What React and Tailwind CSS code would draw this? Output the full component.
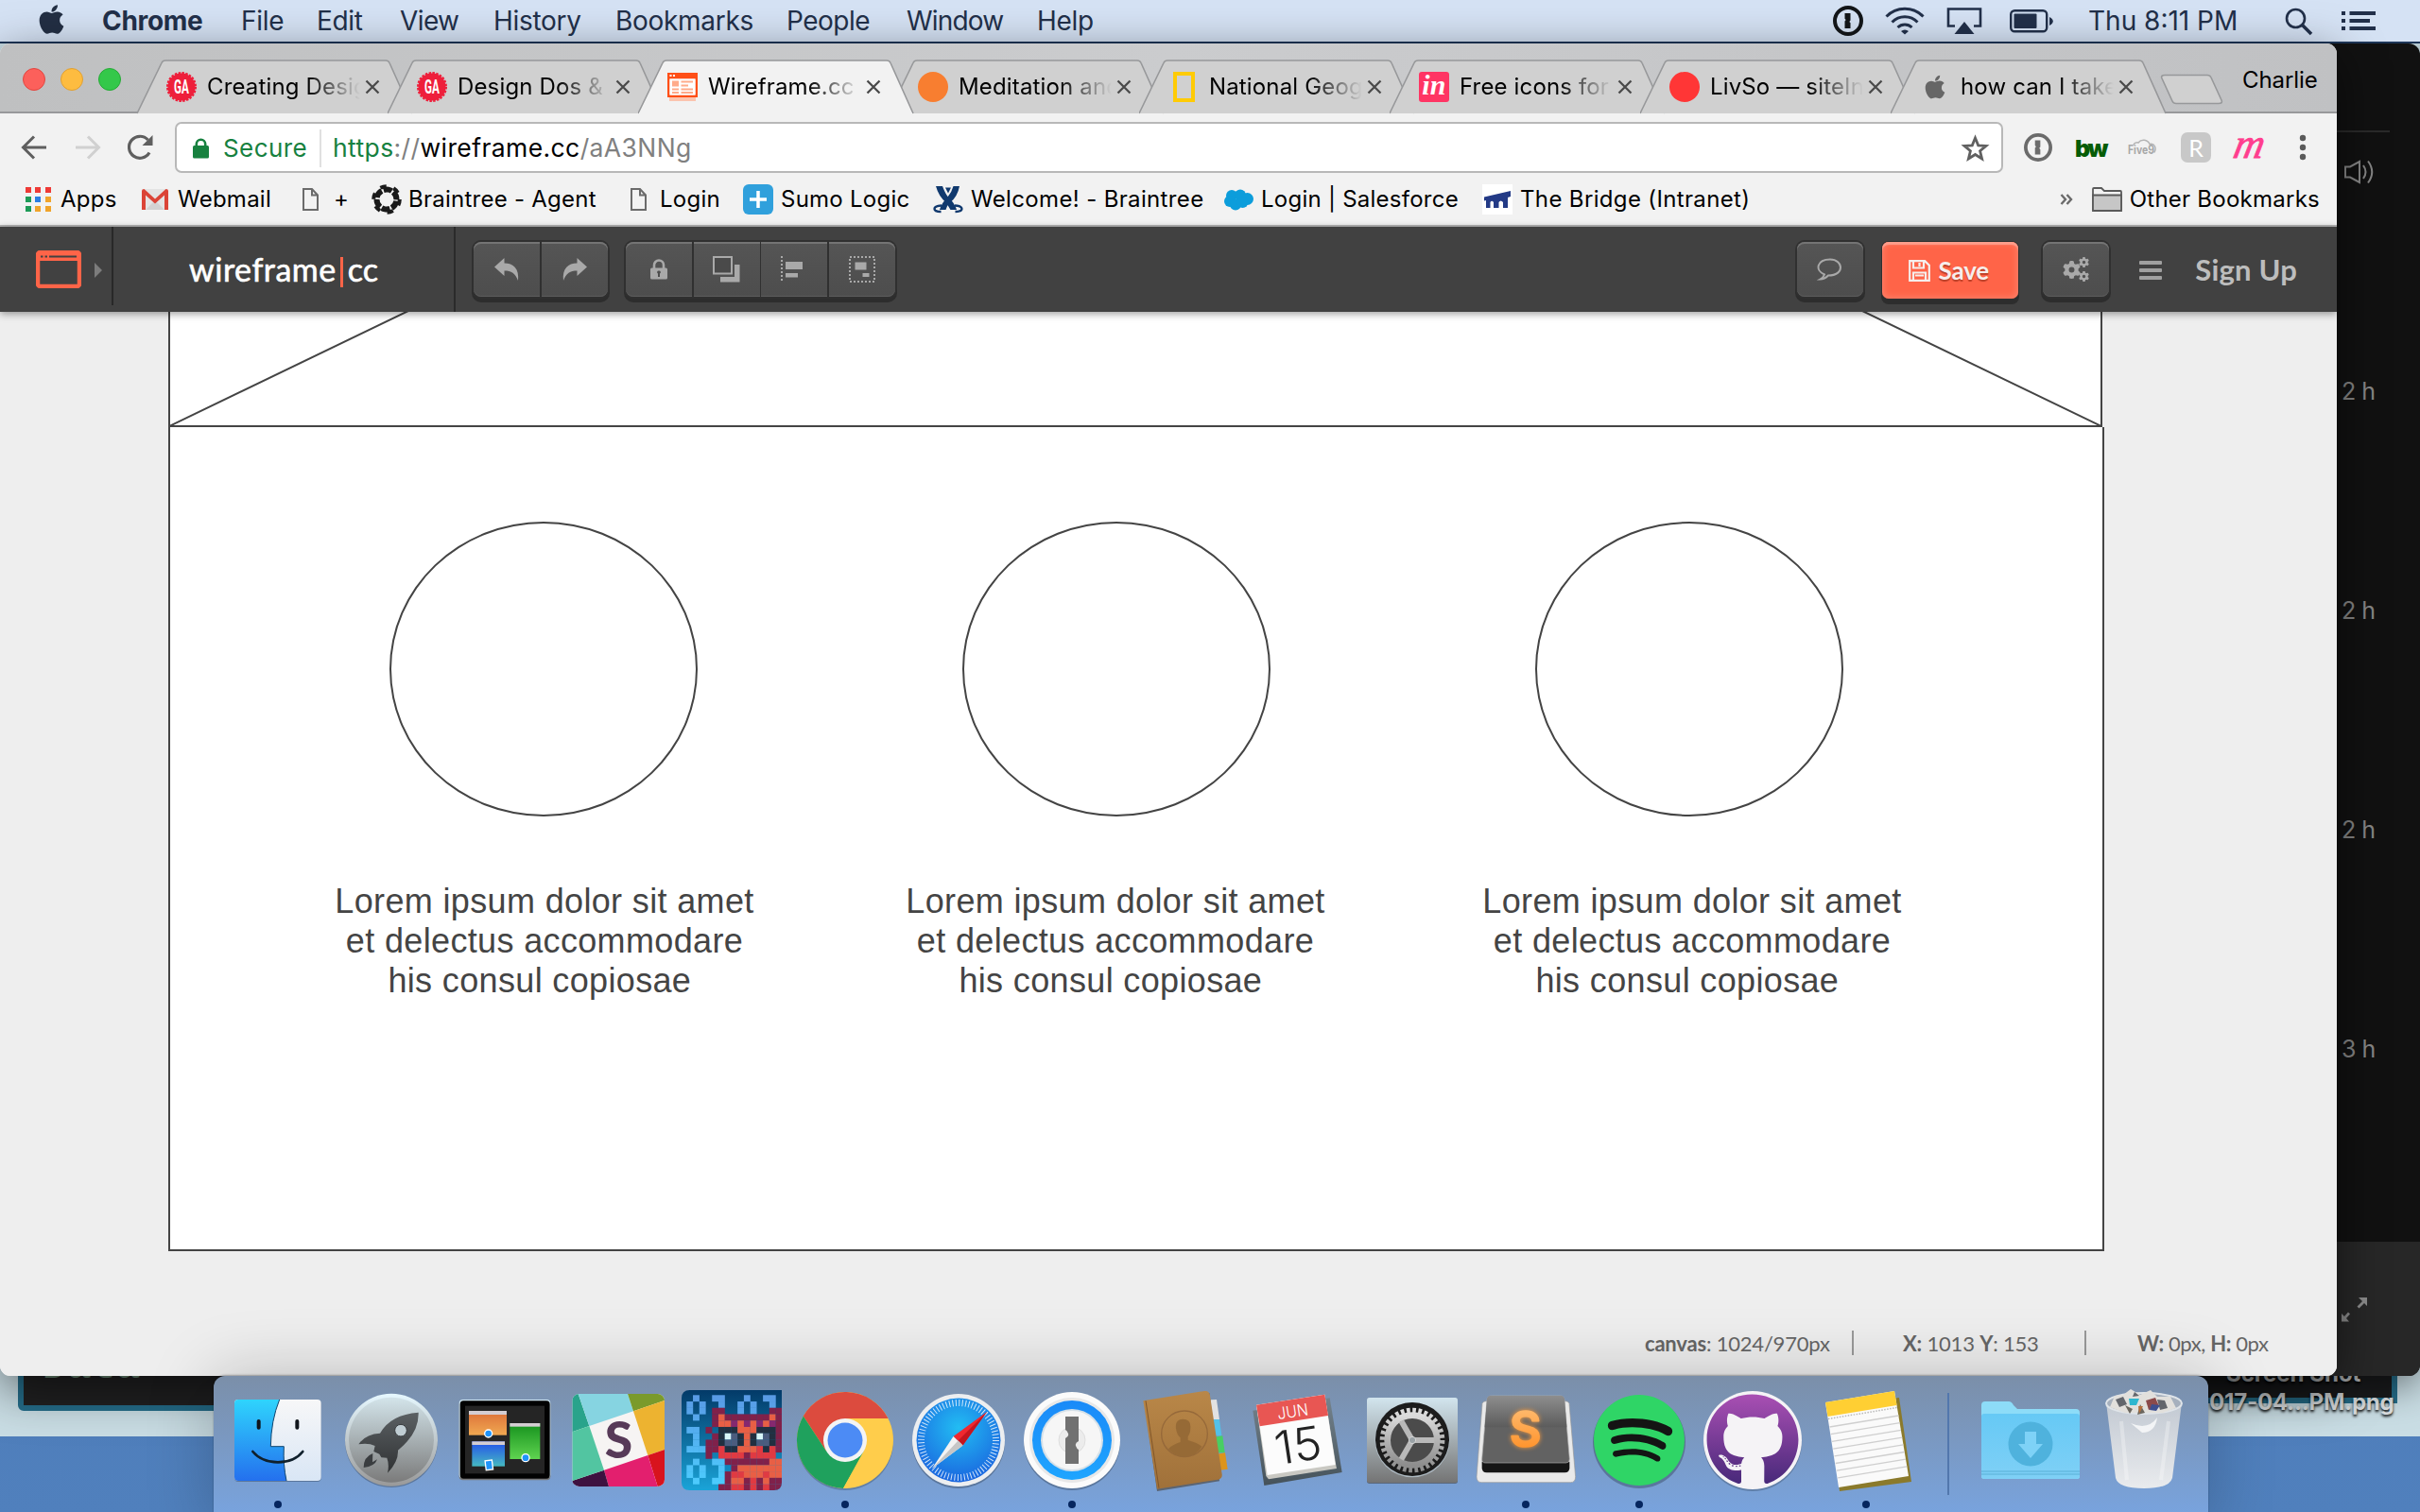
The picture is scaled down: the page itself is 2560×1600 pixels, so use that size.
import { FaApple, FaGithub, FaSpotify } from "react-icons/fa";
import { FaGear } from "react-icons/fa6";

/* ---------- shared little drawings ---------- */

function OnePasswordGlyph({ size, className }) {
  return (
    <svg width={size} height={size} viewBox="0 0 32 32" className={className}>
      <circle cx="16" cy="16" r="14" fill="none" stroke="currentColor" strokeWidth="4" />
      <path d="M12.5 8h6v7.5l-1.2 1.4 1.2 1.4V24h-6v-7.5l1.2-1.4-1.2-1.4z" fill="currentColor" />
    </svg>
  );
}

/* ---------- macOS menu bar ---------- */

function MenuBar() {
  return (
    <div className="absolute inset-x-0 top-0 flex h-[46px] border-b-2 border-[#1d3557] bg-[#d5e2f4] text-[28px] leading-[44px] tracking-[-0.3px] text-[#22304a]">
      <div className="w-[108px] pl-[40px] pt-[3px]">
        <FaApple className="h-[35px] w-[29px] text-[#232f44]" />
      </div>
      <div className="w-[147px] font-bold">Chrome</div>
      <div className="w-[80px]">File</div>
      <div className="w-[88px]">Edit</div>
      <div className="w-[99px] tracking-[-0.6px]">View</div>
      <div className="w-[129px]">History</div>
      <div className="w-[181px]">Bookmarks</div>
      <div className="w-[127px] tracking-[-0.5px]">People</div>
      <div className="w-[138px] tracking-[-0.8px]">Window</div>
      <div>Help</div>
      <div className="ml-auto flex w-[621px] items-start">
        <OnePasswordGlyph size={32} className="mt-[6px] text-[#131619]" />
        <svg className="ml-[22px] mt-[6px]" width="44" height="32" viewBox="0 0 44 32" fill="none" stroke="#22304a" strokeWidth="3">
          <path d="M2.500 11.500a27 27 0 0 1 39 0" />
          <path d="M8.500 17.500a19 19 0 0 1 27 0" />
          <path d="M14.500 23a11 11 0 0 1 15 0" />
          <path d="M18 27a6 6 0 0 1 8 0l-4 3.500z" fill="#22304a" stroke="none" />
        </svg>
        <svg className="ml-[22px] mt-[7px]" width="38" height="30" viewBox="0 0 38 30">
          <path d="M9 20.500H2V2.500h34v18h-7" fill="none" stroke="#22304a" strokeWidth="2.600" />
          <path d="M19 16l10.500 13h-21z" fill="#22304a" />
        </svg>
        <svg className="ml-[29px] mt-[10px]" width="46" height="25" viewBox="0 0 46 25">
          <rect x="1.200" y="1.200" width="38" height="22" rx="4" fill="none" stroke="#22304a" strokeWidth="2.400" />
          <rect x="4.500" y="4.500" width="24" height="15.500" rx="1" fill="#22304a" />
          <path d="M42 8c5 2 5 7 0 9z" fill="#22304a" />
        </svg>
        <div className="ml-[37px] w-[208px] tracking-[0px]">Thu 8:11 PM</div>
        <svg className="mt-[8px]" width="31" height="30" viewBox="0 0 31 30" fill="none" stroke="#22304a">
          <circle cx="11.500" cy="11.500" r="9.500" strokeWidth="2.600" />
          <path d="M18.500 18.500l9.500 9.500" strokeWidth="3.600" />
        </svg>
        <svg className="ml-[29px] mt-[11px]" width="37" height="22" viewBox="0 0 37 22" fill="#22304a">
          <path d="M0 1h4v4H0zM8.500 1H36v4H8.500zM0 9h4v4H0zM8.500 9H30v4H8.500zM0 17h4v4H0zM8.500 17H36v4H8.500z" />
        </svg>
      </div>
    </div>
  );
}

/* ---------- Chrome tabs ---------- */

function GeneralAssembly() {
  return (
    <svg width="32" height="32" viewBox="0 0 32 32">
      <circle cx="16" cy="16" r="14.500" fill="#ee1f3b" />
      <circle cx="16" cy="16" r="14.800" fill="none" stroke="#ee1f3b" strokeWidth="2.400" strokeDasharray="2.500 1.375" />
      <text x="16" y="23" textAnchor="middle" textLength="16" lengthAdjust="spacingAndGlyphs" fontSize="20" fontWeight="700" fill="#fff" fontFamily="Roboto, sans-serif">GA</text>
    </svg>
  );
}

function WireframeFavicon() {
  return (
    <svg width="32" height="30" viewBox="0 0 32 30">
      <path d="M2 26h28v4H2z" fill="#fbc4ae" />
      <path d="M0 0h32v26H0zM2.500 6.500v17h27v-17z" fill="#ff4f17" fillRule="evenodd" />
      <path d="M2.500 2h2v2h-2zM6 2h2v2H6z" fill="#fff" />
      <path d="M2.500 6.500h27v17h-27z" fill="#fff" />
      <path d="M5 8.500h7v6H5zM14.500 8.500H27v2H14.500zM14.500 12.500H22v2h-7.500zM5 16.500h7v2H5zM14.500 16.500H27v2H14.500zM5 20h7v2H5zM14.500 20H27v2H14.500z" fill="#ffab8a" />
    </svg>
  );
}

const tabs = [
  { label: "Creating Desig", icon: <GeneralAssembly /> },
  { label: "Design Dos &", icon: <GeneralAssembly /> },
  { label: "Wireframe.cc", icon: <WireframeFavicon />, active: true },
  { label: "Meditation and", icon: <div className="size-8 rounded-full bg-[#f87e30]" /> },
  {
    label: "National Geog",
    icon: (
      <div className="flex w-8 justify-center">
        <div className="h-8 w-[23px] border-[4px] border-[#ffcb05]" />
      </div>
    ),
  },
  {
    label: "Free icons for",
    icon: (
      <div className="flex size-8 items-center justify-center rounded-[3px] bg-[#ff3564] pb-1 font-['Liberation_Serif',serif] text-[30px] font-bold italic leading-none text-white">
        in
      </div>
    ),
  },
  { label: "LivSo — siteIn", icon: <div className="size-8 rounded-full bg-[#ff3636]" /> },
  { label: "how can I take", icon: <FaApple className="mx-[4px] h-[28px] w-[24px] text-[#666]" /> },
];

function Tab({ tab }) {
  return (
    <div className={tab.active ? "relative z-10 h-[57px] w-[265px] shrink-0" : "relative h-[57px] w-[265px] shrink-0"}>
      <svg className="absolute left-0 top-0" width="292" height="58" viewBox="0 0 292 58">
        <path
          d="M0 57L26 3.500Q27 1 30 1H263Q266 1 267 3.500L291 57"
          fill={tab.active ? "#f2f2f2" : "#d0d0d0"}
          stroke="#97989a"
          strokeWidth="1.600"
        />
        {tab.active && <path d="M1 57.500H290" stroke="#f2f2f2" strokeWidth="3" />}
      </svg>
      <div className="relative flex h-[57px] items-center pl-[31px] text-[24px] tracking-[0.150px] text-black">
        <div className="flex w-8 shrink-0 justify-center">{tab.icon}</div>
        <div className="-mr-[20px] ml-[11px] w-[178px] shrink-0 whitespace-nowrap leading-[56px] [mask-image:linear-gradient(to_right,black_105px,transparent_162px)]">
          {tab.label}
        </div>
        <svg className="ml-[9px] shrink-0" width="16" height="16" viewBox="0 0 16 16" stroke="#4a4a4a" strokeWidth="2.300">
          <path d="M1.500 1.500l13 13M14.500 1.500l-13 13" />
        </svg>
      </div>
    </div>
  );
}

function TabStrip() {
  return (
    <div className="flex h-[74px] border-b-2 border-[#98999b] bg-gradient-to-r from-[#bfc0c1] via-[#cbccce] to-[#c0c1c3]">
      <div className="flex w-[145px] shrink-0 gap-4 pl-6 pt-[26px]">
        <div className="size-6 rounded-full border border-[#e2453f] bg-[#fc605b]" />
        <div className="size-6 rounded-full border border-[#e0a032] bg-[#fdbc40]" />
        <div className="size-6 rounded-full border border-[#25ab35] bg-[#34c84a]" />
      </div>
      <div className="flex pt-[17px]">
        {tabs.map((t) => (
          <Tab key={t.label} tab={t} />
        ))}
      </div>
      <svg className="ml-[20px] mt-[32px] shrink-0" width="68" height="34" viewBox="0 0 68 34">
        <path d="M5 1.500H50Q53 1.500 54 4L65 28Q66.500 31.500 62 31.500H17Q14 31.500 13 29L2 5Q0.500 1.500 5 1.500z" fill="#d0d0d0" stroke="#97989a" strokeWidth="1.600" />
      </svg>
      <div className="ml-[19px] text-[24px] leading-[77px] tracking-[-0.1px] text-black">Charlie</div>
    </div>
  );
}

/* ---------- Chrome toolbar ---------- */

function AddressBar() {
  return (
    <div className="flex h-[64px] items-start pt-[9px]">
      <svg className="ml-[22px] mt-[14px]" width="28" height="26" viewBox="0 0 28 26" fill="none" stroke="#5f5f5f" strokeWidth="3">
        <path d="M27 13H3M14 1.500L2.500 13 14 24.500" />
      </svg>
      <svg className="ml-[29px] mt-[14px]" width="28" height="26" viewBox="0 0 28 26" fill="none" stroke="#d0d0d0" strokeWidth="3">
        <path d="M1 13h24M14 1.500L25.500 13 14 24.500" />
      </svg>
      <svg className="ml-[27px] mt-[13px]" width="29" height="28" viewBox="0 0 29 28">
        <path d="M24 19.500A11.500 11.500 0 1 1 22.500 6" fill="none" stroke="#5f5f5f" strokeWidth="3.200" />
        <path d="M27.500 1v11h-11z" fill="#5f5f5f" />
      </svg>
      <div className="ml-[22px] flex h-[54px] w-[1934px] items-center rounded-[7px] border-2 border-[#b8b8b8] bg-white pt-[1px] text-[26.500px] tracking-[0.400px]">
        <svg className="ml-[17px]" width="17" height="22" viewBox="0 0 17 22">
          <path d="M3.800 9V6.500a4.700 4.700 0 0 1 9.400 0V9" fill="none" stroke="#17813f" strokeWidth="2.600" />
          <rect y="8" width="17" height="13.500" rx="1.500" fill="#17813f" />
        </svg>
        <div className="ml-[15px] text-[26px] text-[#17813f]">Secure</div>
        <div className="ml-[13px] h-10 w-[2px] bg-[#e0e0e0]" />
        <div className="ml-[12px] text-[#808080]">
          <span className="text-[#17813f]">https</span>://<span className="text-black">wireframe.cc</span>/aA3NNg
        </div>
        <svg className="ml-auto mr-[12px]" width="31" height="30" viewBox="0 0 31 30">
          <path d="M15.500 4l3.200 7.800 8.300.6-6.400 5.400 2 8.200-7.100-4.500-7.100 4.500 2-8.200L4 12.400l8.300-.6z" fill="none" stroke="#606060" strokeWidth="2.800" />
        </svg>
      </div>
      <OnePasswordGlyph size={30} className="ml-[22px] mt-[12px] text-[#6b6b6b]" />
      <div className="ml-[24px] mt-[10px] w-[32px] font-['Inter',sans-serif] text-[25px] font-black leading-[36px] tracking-[-2.500px] text-[#065c06]">bw</div>
      <svg className="ml-[24px] mt-[17px]" width="32" height="20" viewBox="0 0 32 20">
        <path d="M6 7.500a4 4 0 0 1 5-2.500 7 7 0 0 1 12 1.500c5-1.500 8 4.500 4.500 9" fill="none" stroke="#b4b4b4" strokeWidth="1.500" />
        <text x="0" y="16.500" textLength="28" lengthAdjust="spacingAndGlyphs" fontSize="12.500" fontWeight="700" fill="#a8a8a8" fontFamily="Inter, sans-serif">Five9</text>
      </svg>
      <div className="ml-[24px] mt-[11px] flex size-8 items-center justify-center rounded-[7px] bg-[#c8c8c8] font-['Lato',sans-serif] text-[25px] leading-none text-white">R</div>
      <div className="ml-[25px] mt-[2px] w-[34px] -skew-x-12 font-['Liberation_Serif',serif] text-[44px] italic leading-[44px] text-[#ff3e8e] [-webkit-text-stroke:0.8px_#ff3e8e]">m</div>
      <svg className="ml-[34px] mt-[13px]" width="8" height="28" viewBox="0 0 8 28" fill="#5a5a5a">
        <circle cx="4" cy="4" r="3.200" />
        <circle cx="4" cy="14" r="3.200" />
        <circle cx="4" cy="24" r="3.200" />
      </svg>
    </div>
  );
}

function PageIcon() {
  return (
    <svg width="17" height="24" viewBox="0 0 17 24" fill="none" stroke="#6b6b6b" strokeWidth="2">
      <path d="M1 1h9l6 6.500V23H1zM10 1v6.500h6" />
    </svg>
  );
}

function Bookmarks() {
  const dots = ["#ee3a36", "#ee3a36", "#ee3a36", "#1e9b57", "#2a7de1", "#f0a42a", "#1e9b57", "#f0a42a", "#f0a42a"];
  return (
    <div className="flex h-[56px] items-center border-b-2 border-[#b4b4b4] text-[24px] leading-[54px] tracking-[0.250px] text-black">
      <div className="ml-[27px] grid w-[27px] grid-cols-3 gap-[4px]">
        {dots.map((c, i) => (
          <div key={i} className="h-[6px] w-[6px]" style={{ backgroundColor: c }} />
        ))}
      </div>
      <div className="ml-[10px] w-[86px]">Apps</div>
      <svg width="28" height="22" viewBox="0 0 28 22">
        <rect width="28" height="22" rx="2" fill="#e4e4e4" />
        <path d="M4 22L14 12l10 10z" fill="#d3d3d3" />
        <path d="M0 22V2Q0 0 2.500 0L14 10.500 25.500 0Q28 0 28 2V22H24V6.500L14 15.500 4 6.500V22z" fill="#db4437" />
      </svg>
      <div className="ml-[10px] w-[132px]">Webmail</div>
      <PageIcon />
      <div className="ml-[16px] w-[40px]">+</div>
      <svg width="32" height="32" viewBox="-16 -16 32 32">
        <circle r="10.500" fill="none" stroke="#1a1a1a" strokeWidth="6" strokeDasharray="9 2" transform="rotate(10)" />
        <circle r="13.800" fill="none" stroke="#1a1a1a" strokeWidth="4" strokeDasharray="6.500 7.950" />
      </svg>
      <div className="ml-[7px] w-[235px]">Braintree - Agent</div>
      <PageIcon />
      <div className="ml-[14px] w-[88px]">Login</div>
      <div className="flex size-8 items-center justify-center rounded-[6px] bg-[#30a0dc]">
        <svg width="20" height="20" viewBox="0 0 20 20" stroke="#fff" strokeWidth="3.500">
          <path d="M10 1v18M1 10h18" />
        </svg>
      </div>
      <div className="ml-[8px] w-[161px]">Sumo Logic</div>
      <svg width="32" height="30" viewBox="0 0 32 30" fill="#10396e">
        <path d="M3 1h7q3 8 6 11.500Q23 19 25 26h-6.500Q16 22 14 18.500 6 12 3 1z" />
        <path d="M28 1h-6.500q-2 7-6 11.500Q9 19 7 26h6.500Q15 21 18 18.500 26 12 28 1z" />
        <path d="M13 2.500h6l-3 6z" />
        <path d="M9 21.500Q1.500 22 1.500 25t7 3M23 21.500q7.500.5 7.500 3.500t-7 3" fill="none" stroke="#10396e" strokeWidth="2.400" />
      </svg>
      <div className="ml-[8px] w-[268px] tracking-[0.350px]">Welcome! - Braintree</div>
      <svg width="31" height="23" viewBox="0 0 31 23" fill="#0c9ddb">
        <circle cx="8" cy="7" r="6" />
        <circle cx="17" cy="6.500" r="6" />
        <circle cx="24.500" cy="10.500" r="6.500" />
        <circle cx="6" cy="13" r="6" />
        <circle cx="12" cy="16.500" r="6" />
        <circle cx="19.500" cy="14" r="6" />
      </svg>
      <div className="ml-[8px] w-[234px]">Login | Salesforce</div>
      <div className="flex size-8 items-center bg-white">
        <svg width="32" height="22" viewBox="0 0 32 22" fill="#233a86">
          <path d="M2 8.500L30 2v6l-3 1V20h-5v-6q-2.500-3-4.500 0v6H12v-6q-2-2.500-3.500 0v6H4v-8l-2 .5z" />
        </svg>
      </div>
      <div className="ml-[8px] tracking-[0.350px]">The Bridge (Intranet)</div>
      <svg className="ml-auto" width="14" height="12" viewBox="0 0 14 12" fill="none" stroke="#6b6b6b" strokeWidth="2.400">
        <path d="M1.500 1L6 6l-4.500 5M7.500 1L12 6l-4.500 5" />
      </svg>
      <svg className="ml-[20px]" width="32" height="26" viewBox="0 0 32 26">
        <path d="M1 24V2Q1 1 2 1H10L13 4H30Q31 4 31 5V24Q31 25 30 25H2Q1 25 1 24z" fill="#f2f2f2" stroke="#5a5a5a" strokeWidth="1.800" />
        <path d="M1 8.500H31V25H1z" fill="#c6c6c6" stroke="#5a5a5a" strokeWidth="1.800" />
      </svg>
      <div className="ml-[8px] mr-[18px]">Other Bookmarks</div>
    </div>
  );
}

/* ---------- wireframe.cc app ---------- */

function BarButton({ first, last, children }) {
  const base =
    "flex h-[58px] w-[70px] items-center justify-center bg-gradient-to-b from-[#555] to-[#4d4d4d] text-[#a9a9a9] shadow-[inset_0_2px_0_#747474,inset_0_-1px_0_#5c5c5c]";
  const round = first && last ? " rounded-[8px]" : first ? " rounded-l-[8px]" : last ? " rounded-r-[8px]" : "";
  return <div className={base + round}>{children}</div>;
}

function ButtonGroup({ children }) {
  return (
    <div className="flex h-[58px] gap-[1.500px] rounded-[8px] bg-[#303030] shadow-[0_0_0_2px_#303030,0_4px_0_2px_#2d2d2d]">{children}</div>
  );
}

function AppHeader() {
  return (
    <div className="relative z-10 flex h-[90px] items-start bg-[#414141] font-['Lato',sans-serif] shadow-[0_2px_8px_rgba(0,0,0,0.4)]">
      <div className="flex h-[83px] w-[120px] border-r-2 border-[#282828]">
        <svg className="ml-[38px] mt-[25px]" width="48" height="40" viewBox="0 0 48 40">
          <rect x="2" y="2" width="44" height="36" rx="2.500" fill="#414141" stroke="#ff6448" strokeWidth="4.500" />
          <path d="M2 2h44v9H2z" fill="#ff6448" />
          <path d="M5 5.500h2.500v2H5zM9.500 5.500H12v2H9.500zM14 5.500h29v2H14z" fill="#414141" />
        </svg>
        <svg className="ml-[14px] mt-[38px]" width="8" height="16" viewBox="0 0 8 16">
          <path d="M0 0l8 8-8 8z" fill="#7c7c7c" />
        </svg>
      </div>
      <div className="flex h-[90px] w-[362px] items-center justify-center border-r-2 border-[#2a2a2a] text-[34px] leading-[90px] text-white [-webkit-text-stroke:0.6px_white]">
        <span className="tracking-[0.500px]">wireframe</span>
        <span className="ml-[4px] mr-[5px] mt-[5px] h-[32px] w-[3px] bg-[#ff6448]" />
        <span>cc</span>
      </div>
      <div className="ml-[19px] mt-4">
        <ButtonGroup>
          <BarButton first>
            <svg width="27" height="25" viewBox="0 0 27 25" fill="currentColor">
              <path d="M10.500 0v5.500C20 5.500 26.500 11 25 24 22 16 18 13.500 10.500 13.500V19L0 9.500z" />
            </svg>
          </BarButton>
          <BarButton last>
            <svg width="27" height="25" viewBox="0 0 27 25" fill="currentColor">
              <path d="M16.500 0v5.500C7 5.500.5 11 2 24 5 16 9 13.500 16.500 13.500V19L27 9.500z" />
            </svg>
          </BarButton>
        </ButtonGroup>
      </div>
      <div className="ml-[19.500px] mt-4">
        <ButtonGroup>
          <BarButton first>
            <svg width="18" height="22" viewBox="0 0 18 22">
              <path d="M4 10V6.500a5 5 0 0 1 10 0V10" fill="none" stroke="currentColor" strokeWidth="2.600" />
              <rect y="9.500" width="18" height="12" rx="1.500" fill="currentColor" />
              <path d="M9 12.500a1.600 1.600 0 0 1 1 3v3.500H8v-3.500a1.600 1.600 0 0 1 1-3z" fill="#4d4d4d" />
            </svg>
          </BarButton>
          <BarButton>
            <svg width="29" height="28" viewBox="0 0 29 28">
              <path d="M23 9h5.500v18.500H8V22h15z" fill="currentColor" />
              <rect x="1" y="1" width="19" height="17.500" fill="#4a4a4a" stroke="currentColor" strokeWidth="2" />
            </svg>
          </BarButton>
          <BarButton>
            <svg className="mr-[4px]" width="24" height="28" viewBox="0 0 24 28">
              <path d="M1 0v28" stroke="currentColor" strokeWidth="2" strokeDasharray="2 2" />
              <path d="M5 6h18v8H5zM5 18h13v4.500H5z" fill="currentColor" />
            </svg>
          </BarButton>
          <BarButton last>
            <svg width="28" height="28" viewBox="0 0 28 28">
              <rect x="1" y="1" width="26" height="26" fill="none" stroke="currentColor" strokeWidth="2" strokeDasharray="2 2" />
              <path d="M6.500 6.500h12v8h-12zM14.500 18h7v4h-7z" fill="currentColor" />
            </svg>
          </BarButton>
        </ButtonGroup>
      </div>
      <div className="ml-auto mt-4">
        <ButtonGroup>
          <BarButton first last>
            <svg width="28" height="24" viewBox="0 0 28 24" fill="none" stroke="currentColor" strokeWidth="2">
              <path d="M8 17.500C-2.500 13 0 1.500 14 1.500S30 18.500 12 18.500Q8 22.500 3.500 22.500 7 20.500 8 17.500z" />
            </svg>
          </BarButton>
        </ButtonGroup>
      </div>
      <div className="ml-[20px] mt-4 flex h-[60px] w-[144px] items-center justify-center gap-[9px] rounded-[7px] bg-[#ff6448] pr-[4px] text-[26px] font-bold text-[#f6eeec] shadow-[0_0_0_1px_#303030,0_5px_0_1px_#2d2d2d,inset_0_3px_1px_#ff9d8b,inset_0_0_8px_#ff8a74] [text-shadow:0_2px_1px_rgba(120,30,10,0.5)]">
        <svg width="23" height="23" viewBox="0 0 23 23" fill="none" stroke="#f6eeec" strokeWidth="2.200">
          <path d="M1.200 1.200h16l4.600 4.600v16H1.200zM5 1.500v7h11v-7M5 21.500v-8h13v8M7 16.500h9" />
          <path d="M11.500 3v4" />
        </svg>
        <span className="tracking-[-0.200px]">Save</span>
      </div>
      <div className="ml-[26px] mt-4">
        <ButtonGroup>
          <BarButton first last>
            <span className="relative flex h-[26px] w-[28px] items-center">
              <FaGear className="size-[19px]" />
              <FaGear className="absolute right-0 top-0 size-[11px]" />
              <FaGear className="absolute bottom-0 right-0 size-[11px]" />
            </span>
          </BarButton>
        </ButtonGroup>
      </div>
      <div className="ml-[32px] mt-[36px] flex w-[24px] flex-col gap-[4px]">
        <div className="h-[4px] rounded-[1px] bg-[#a0a0a0]" />
        <div className="h-[4px] rounded-[1px] bg-[#a0a0a0]" />
        <div className="h-[4px] rounded-[1px] bg-[#a0a0a0]" />
      </div>
      <div className="ml-[35px] mr-[42px] text-[31px] font-bold leading-[90px] tracking-[0.200px] text-[#bdbdbd]">Sign Up</div>
    </div>
  );
}

function Feature({ textClass }) {
  return (
    <div className="flex w-[606px] flex-col items-center">
      <div className="h-[312px] w-[326px] rounded-[50%] border-2 border-[#444]" />
      <div className={textClass}>
        Lorem ipsum dolor sit amet
        <br />
        et delectus accommodare
        <br />
        his consul copiosae&nbsp;
      </div>
    </div>
  );
}

function Canvas() {
  return (
    <div className="flex h-[1126px] flex-col bg-[#eee]">
      <div className="ml-[178px] h-[122px] w-[2046px] shrink-0 border-x-2 border-b-2 border-[#444] bg-white">
        <svg width="2042" height="120" viewBox="0 0 2042 120" stroke="#444" strokeWidth="2">
          <path d="M-1 121L252 -1M2043 121L1790 -1" />
        </svg>
      </div>
      <div className="ml-[178px] flex h-[872px] w-[2048px] shrink-0 border-x-2 border-b-2 border-[#444] bg-white pl-[92px] pt-[100px] text-center font-['Liberation_Sans',sans-serif] text-[36px] leading-[42px] tracking-[0.350px] text-[#444]">
        <Feature textClass="mt-[69px] translate-x-[1px]" />
        <Feature textClass="mt-[69px] translate-x-[-1px]" />
        <Feature textClass="mt-[69px] translate-x-[3px]" />
      </div>
      <div className="ml-auto mr-[71px] mt-[76px] flex h-[42px] shrink-0 items-center font-['Lato',sans-serif] text-[22px] tracking-[-0.200px] text-[#666]">
        <div className="w-[219px]"><b>canvas</b>: 1024/970px</div>
        <div className="h-[26px] w-[2px] bg-[#999]" />
        <div className="ml-[52px] w-[192px]"><b>X:</b> 1013 <b>Y</b>: 153</div>
        <div className="h-[26px] w-[2px] bg-[#999]" />
        <div className="ml-[54px] w-[140px] whitespace-nowrap tracking-[-0.400px]"><b>W:</b> 0px, <b>H:</b> 0px</div>
      </div>
    </div>
  );
}

/* ---------- desktop behind ---------- */

function Desktop() {
  return (
    <>
      <div className="absolute inset-x-0 top-0 h-[1520px] bg-[#c9dde4]" />
      <div className="absolute left-[19px] top-[1380px] h-[113px] w-[420px] overflow-hidden rounded-[6px] border-[6px] border-[#256e8b] bg-[#212122] pl-[20px] pt-[45px] font-['Liberation_Mono',monospace] text-[43px] font-bold leading-[32px] text-[#6b8a76]">
        Data
      </div>
      <div className="absolute left-[2200px] top-[1380px] h-[105px] w-[336px] border-[6px] border-[#256e8b] bg-[#1b1c1e]" />
      <div className="absolute left-[2330px] top-[1440px] w-[230px] pl-[7px] text-[24px] font-bold text-[#dfe2e4] [text-shadow:0_2px_3px_black]">
        <div className="h-[30px] pl-[18px] leading-[28px]">Screen Shot</div>
        <div className="whitespace-nowrap leading-[28px] tracking-[-0.200px]">017-04...PM.png</div>
      </div>
    </>
  );
}

function PlayerWindow() {
  return (
    <div className="absolute left-[1500px] top-[46px] flex h-[1410px] w-[1060px] flex-col items-end rounded-[12px] bg-[#111] text-[25px] tracking-[-0.500px] text-[#858585] shadow-[0_10px_40px_rgba(0,0,0,0.5)]">
      <div className="mt-[92px] mr-[32px] h-[2px] w-[56px] bg-[#2a2a2a]" />
      <svg className="mr-[47px] mt-[28px]" width="34" height="28" viewBox="0 0 34 28" fill="none" stroke="#858585" strokeWidth="2">
        <path d="M2 8.500h5L17 3v22L7 19.500H2zM21 7q5 7 0 14M26 2.500q8.500 11.500 0 23" />
      </svg>
      <div className="mt-[100px] flex flex-col">
        {["2 h", "2 h", "2 h", "3 h"].map((t, i) => (
          <div key={i} className="h-[232px] w-[83px] pt-[102px] leading-[32px]">
            {t}
          </div>
        ))}
      </div>
      <div className="mt-[90px] h-[142px] w-full rounded-b-[12px] bg-[#272727] pt-[58px]">
        <svg className="ml-auto mr-[55px]" width="29" height="28" viewBox="0 0 29 28" fill="#8b8b8b">
          <path d="M19 1h9v9l-3-3-5.500 5.500-2-2L23 5zM1 18l3 3 4-4.500 2 2L6 23l3 3.500H1z" />
        </svg>
      </div>
    </div>
  );
}

/* ---------- dock ---------- */

function DockItem({ viewBox = "0 0 120 144", running, children }) {
  return (
    <div className="relative h-[144px] w-[120px]">
      <svg width="120" height="144" viewBox={viewBox}>{children}</svg>
      {running && <div className="absolute bottom-[4px] left-[56px] size-2 rounded-full bg-[#06265f]" />}
    </div>
  );
}

function Gradient({ id, from, to }) {
  return (
    <linearGradient id={id} x1="0" y1="0" x2="0" y2="1">
      <stop offset="0" stopColor={from} />
      <stop offset="1" stopColor={to} />
    </linearGradient>
  );
}

const finder = (
  <>
    <Gradient id="fb" from="#2fd4fd" to="#2470ee" />
    <Gradient id="fw" from="#f7f7f8" to="#d9e6f5" />
    <rect x="24" y="96" width="275" height="258" rx="12" fill="#000" opacity=".25" />
    <rect x="24" y="93" width="275" height="258" rx="12" fill="url(#fw)" />
    <path d="M36 93H167Q140 160 139 242H181Q178 300 189 351H36Q24 351 24 339V105Q24 93 36 93z" fill="url(#fb)" />
    <path d="M167 93Q140 160 139 242H181Q178 300 189 351" fill="none" stroke="#12466e" strokeWidth="3" />
    <path d="M101 162v20M223 162v20" stroke="#10151c" strokeWidth="12" strokeLinecap="round" />
    <path d="M82 258Q110 292 162 292T241 258" fill="none" stroke="#10202c" strokeWidth="8" strokeLinecap="round" />
  </>
);

const launchpad = (
  <>
    <Gradient id="lp" from="#d3e4ea" to="#7b7b7b" />
    <Gradient id="lr" from="#e6f8ff" to="#999" />
    <Gradient id="lk" from="#5b6063" to="#303234" />
    <circle cx="522" cy="225" r="147" fill="#000" opacity=".25" />
    <circle cx="522" cy="221" r="147" fill="url(#lr)" />
    <circle cx="522" cy="221" r="135" fill="url(#lp)" />
    <path d="M608 134Q520 140 486 200Q440 202 418 235Q450 230 470 240L466 258L484 266L490 277L508 278Q516 300 510 326Q545 290 543 254Q610 200 608 134z" fill="url(#lk)" />
    <path d="M463 264Q434 275 434 309Q470 305 477 283L462 292z" fill="#3a3d40" />
    <circle cx="552" cy="191" r="19" fill="#c0cdd3" stroke="#373a3d" strokeWidth="3" />
  </>
);

const missionControl = (
  <>
    <Gradient id="mo" from="#dc6f38" to="#f0a851" />
    <Gradient id="mb" from="#2450ea" to="#45b9c2" />
    <Gradient id="mg" from="#15911d" to="#5fd350" />
    <rect x="737" y="97" width="290" height="252" rx="12" fill="#777" />
    <rect x="737" y="93" width="290" height="250" rx="12" fill="#cfe6f2" />
    <rect x="740" y="97" width="285" height="247" rx="11" fill="#020202" />
    <rect x="756" y="113" width="252" height="215" fill="#252525" />
    <rect x="768" y="129" width="120" height="77" fill="url(#mo)" />
    <rect x="768" y="129" width="120" height="12" fill="#d4cdd2" />
    <rect x="778" y="226" width="104" height="79" fill="url(#mb)" />
    <rect x="778" y="226" width="104" height="11" fill="#d4cdd2" />
    <rect x="898" y="168" width="96" height="114" fill="url(#mg)" />
    <rect x="898" y="168" width="96" height="11" fill="#d4cdd2" />
    <circle cx="830" cy="201" r="12" fill="#1f94fb" stroke="#fff" strokeWidth="4" />
    <circle cx="948" cy="278" r="12" fill="#1f94fb" stroke="#fff" strokeWidth="4" />
    <rect x="821" y="286" width="22" height="30" fill="#1f94fb" stroke="#fff" strokeWidth="4" transform="rotate(-7 832 301)" />
  </>
);

const slack = (
  <>
    <clipPath id="sc"><rect x="1096" y="75" width="293" height="294" rx="22" /></clipPath>
    <g clipPath="url(#sc)">
      <rect x="1096" y="75" width="293" height="294" fill="#f6f4f3" />
      <path d="M1096 75H1115L1150 177L1096 196z" fill="#29a38b" />
      <path d="M1115 75H1272L1290 130L1150 177z" fill="#86d4e1" />
      <path d="M1272 75H1389V96L1290 130z" fill="#7a9a2b" />
      <path d="M1290 130L1389 96V252L1336 270z" fill="#edb330" />
      <path d="M1336 270L1389 252V369H1367z" fill="#d8131d" />
      <path d="M1197 317L1336 270L1367 369H1212z" fill="#e31f6e" />
      <path d="M1096 351L1197 317L1212 369H1096z" fill="#3e1240" />
      <path d="M1096 196L1150 177L1197 317L1096 351z" fill="#52c5a1" />
    </g>
    <text x="1243" y="279" textAnchor="middle" fontSize="160" fontWeight="900" fill="#573a58" fontFamily="Lato, sans-serif">S</text>
  </>
);

const catRows = [
  "................",
  "..L..LL...L..LL.",
  ".L.L..L..L.L..L.",
  ".L.L.mm..L.L..mm",
  "..L..mommmmmmmom",
  ".....moopopopopm",
  ".LL.m.kkkoookkkm",
  "..L..mkwgkokwgkm",
  "..L.mmkggkokggkm",
  ".LLLmmrkkooorkrm",
  "....m.rrrrmrrrr.",
  "..L..LLmmmmmmmoo",
  ".L.L..LbmooooooO",
  ".L.L..LmrrooorOo",
  "..L..LLmoomrmomm",
  "......mmrrmrmrmm",
];
const catColors = { m: "#80214a", o: "#e85f45", O: "#e85f45", r: "#e03a42", p: "#86286f", k: "#222f40", g: "#4b5c7e", w: "#d8f5f8", b: "#0f86bd" };
const cat = (
  <>
    <Gradient id="cg" from="#033a68" to="#1aa4d8" />
    <clipPath id="cc"><path d="M59 33H351V326Q351 351 326 351H59Q33 351 33 326V59Q33 33 59 33z" /></clipPath>
    <linearGradient id="cu" gradientUnits="userSpaceOnUse" x1="0" y1="33" x2="0" y2="351">
      <stop offset="0" stopColor="#5a97e4" />
      <stop offset="1" stopColor="#4bcfff" />
    </linearGradient>
    <g clipPath="url(#cc)">
      <rect x="33" y="33" width="319" height="319" fill="url(#cg)" />
      {catRows.flatMap((row, y) =>
        [...row].map((c, x) =>
          c === "." ? null : (
            <rect key={y + "-" + x} x={28.7 + x * 20.2} y={28.7 + y * 20.2} width="20.6" height="20.6" fill={c === "L" ? "url(#cu)" : catColors[c]} />
          ),
        ),
      )}
    </g>
  </>
);

const chrome = (
  <>
    <circle cx="60" cy="70" r="51" fill="#000" opacity=".2" />
    <circle cx="60" cy="68" r="51" fill="#ffcd4b" />
    <path d="M60 45H105.500A51 51 0 0 0 15.800 42.500L40 79.500z" fill="#dc4b3e" />
    <path d="M15.800 42.500A51 51 0 0 0 58 119L80 80 60 68 40 79.500z" fill="#1fa15d" />
    <path d="M58 119L80 79 60 68 80 52Q92 78 62 119z" fill="#ffcd4b" />
    <circle cx="60" cy="68" r="23" fill="#f4f4f4" />
    <circle cx="60" cy="68" r="18.500" fill="#4c8bf5" />
  </>
);

const safari = (
  <>
    <radialGradient id="sf" cx=".5" cy=".35" r=".65">
      <stop offset="0" stopColor="#22bdf3" />
      <stop offset="1" stopColor="#1a66df" />
    </radialGradient>
    <circle cx="60" cy="70" r="49" fill="#000" opacity=".25" />
    <circle cx="60" cy="68" r="49" fill="#eceef0" />
    <circle cx="60" cy="68" r="44.500" fill="url(#sf)" />
    <circle cx="60" cy="68" r="39.500" fill="none" stroke="#fff" strokeWidth="7" strokeDasharray="1 2.447" opacity=".8" />
    <path d="M90 38L64.500 73.500 54.500 64z" fill="#f0282f" />
    <path d="M90 38L64.500 73.500 59.500 68.500z" fill="#c4161f" />
    <path d="M32 98L64.500 73.500 54.500 64z" fill="#f3f3f3" />
    <path d="M32 98L64.500 73.500 59.500 68.500z" fill="#c6c6c6" />
  </>
);

const onePassword = (
  <>
    <Gradient id="op" from="#1a8af8" to="#1ea5ff" />
    <circle cx="60" cy="70" r="51" fill="#000" opacity=".25" />
    <circle cx="60" cy="68" r="51" fill="#fbfbfb" />
    <circle cx="60" cy="68" r="45" fill="#e8e8e8" />
    <circle cx="60" cy="68" r="42" fill="url(#op)" />
    <circle cx="60" cy="68" r="33" fill="#d5e0e8" />
    <circle cx="60" cy="68" r="31" fill="#f6f6f6" />
    <circle cx="60" cy="68" r="14" fill="#ececec" stroke="#dedede" />
    <path d="M53 43h14v26q-4 2-3 5t3 4v15H53V66q4-2 3-5t-3-4z" fill="#717171" />
  </>
);

const contacts = (
  <>
    <Gradient id="co" from="#b98748" to="#a0713a" />
    <path d="M62 104L102 384L300 352L268 72z" fill="#3d2a12" opacity=".5" />
    <path d="M272 94L291 93L300 156H276z" fill="#e2e2e2" />
    <path d="M276 156H300L307 208H280z" fill="#53c0e8" />
    <path d="M284 212L310 208L317 262H290z" fill="#48cf63" />
    <path d="M292 266L318 262L326 314L296 318z" fill="#dc941d" />
    <path d="M58 97L252 66Q268 64 270 80L308 330Q310 344 296 347L102 377z" fill="url(#co)" />
    <path d="M66 97L108 374" stroke="#80562a" strokeWidth="3" />
    <circle cx="189" cy="202" r="73" fill="none" stroke="#96693a" strokeWidth="4" />
    <path d="M162 185Q158 155 184 155T208 182Q208 200 200 210V222Q230 230 244 242Q225 274 190 275Q158 274 138 250Q150 236 176 228V214Q165 205 162 185z" fill="#966a36" />
  </>
);

const calendar = (
  <>
    <Gradient id="ca" from="#75838d" to="#45525a" />
    <path d="M406 128L650 88L689 324L442 366z" fill="url(#ca)" />
    <path d="M417 110L634 77L670 302L672 312L456 346L448 336z" fill="#c9c8c2" />
    <path d="M417 110L634 77L668 300L452 333z" fill="#fcfcfc" />
    <path d="M417 110L634 77L645 144L428 178z" fill="#e85653" />
    <text x="532" y="149" textAnchor="middle" fontSize="52" fill="#fff" fontFamily="Inter, sans-serif" fontWeight="300" textLength="98" lengthAdjust="spacingAndGlyphs" transform="rotate(-8.500 532 127)">JUN</text>
    <text x="549" y="290" textAnchor="middle" fontSize="146" fill="#222" fontFamily="Inter, sans-serif" fontWeight="300" textLength="150" lengthAdjust="spacingAndGlyphs" transform="rotate(-8.500 549 237)">15</text>
  </>
);

const prefs = (
  <>
    <Gradient id="pb" from="#d2e5ee" to="#747474" />
    <Gradient id="pg" from="#dcdcdc" to="#8d8d8d" />
    <rect x="768" y="90" width="288" height="270" rx="8" fill="#444" opacity=".6" />
    <rect x="768" y="87" width="288" height="270" rx="8" fill="url(#pb)" />
    <circle cx="912" cy="221" r="119" fill="#aebac2" />
    <circle cx="912" cy="219" r="117" fill="#1c1c1c" />
    <circle cx="912" cy="222" r="95" fill="none" stroke="url(#pg)" strokeWidth="16" strokeDasharray="11 7.652" />
    <circle cx="912" cy="222" r="79" fill="#4b4b4b" stroke="url(#pg)" strokeWidth="20" />
    <path d="M912 222H982M912 222L877 161M912 222L877 283" stroke="#b9b9b9" strokeWidth="18" />
    <circle cx="912" cy="222" r="11" fill="#9aa2a6" stroke="#d5d5d5" strokeWidth="3" />
  </>
);

const sublime = (
  <>
    <Gradient id="sb" from="#8e8e8e" to="#5c5c5c" />
    <Gradient id="so" from="#ffc27c" to="#ff8a1c" />
    <path d="M1134 106Q1136 98 1146 98H1398Q1408 98 1410 106L1430 338Q1430 356 1414 356H1132Q1116 356 1116 338z" fill="#e9e9e9" stroke="#999" strokeWidth="2" />
    <path d="M1133 290H1411V310Q1411 325 1396 325H1148Q1133 325 1133 310z" fill="#161616" />
    <path d="M1149 94Q1150 81 1163 81H1381Q1394 81 1395 94L1411 282Q1411 294 1400 294H1144Q1132 294 1133 282z" fill="#626262" stroke="#adadad" strokeWidth="2" />
    <path d="M1149 94Q1150 81 1163 81H1381Q1394 81 1395 94L1402 181H1142z" fill="url(#sb)" />
    <text x="1271" y="242" textAnchor="middle" fontSize="156" fontWeight="600" fill="url(#so)" stroke="url(#so)" strokeWidth="5" strokeLinejoin="round" fontFamily="Inter, sans-serif" className="drop-shadow-[0_0_8px_#ff9d3a]">S</text>
  </>
);

const spotify = (
  <>
    <circle cx="60" cy="70" r="49" fill="#000" opacity=".25" />
    <circle cx="60" cy="68" r="44" fill="#141414" />
    <FaSpotify x="10.500" y="18.500" size={99} color="#2fd566" />
  </>
);

const github = (
  <>
    <Gradient id="gh" from="#a94fb3" to="#48297a" />
    <circle cx="60" cy="70" r="52" fill="#000" opacity=".2" />
    <circle cx="60" cy="68" r="52" fill="#f5f3f6" />
    <FaGithub x="10" y="18" size={100} fill="url(#gh)" />
  </>
);

const notes = (
  <>
    <path d="M20 31L95 22 108 111 32 121z" fill="#8b7a2b" transform="translate(0 1)" />
    <path d="M17 28L90 16 105 106 31 118z" fill="#fafafa" />
    <path d="M17 28L90 16 92.500 31 19.500 43z" fill="#ffcf33" />
    <path d="M20 45.500L93 33.500" stroke="#b9b9b9" strokeWidth="1.500" strokeDasharray="1.500 1.500" />
    {[0, 1, 2, 3, 4, 5, 6, 7].map((i) => (
      <path key={i} d={`M${21.5 + i * 1.25} ${54 + i * 7.7}l73-12`} stroke="#cfcfcf" strokeWidth="1.300" />
    ))}
  </>
);

const downloads = (
  <>
    <Gradient id="df" from="#66c9f5" to="#7fd0f6" />
    <path d="M8 31Q8 27 12 27H37Q40 27 42 31L46 35H108Q112 35 112 39V106Q112 109 109 109H11Q8 109 8 106z" fill="#8ddcf8" />
    <path d="M8 43Q8 40 11 40H109Q112 40 112 43V106Q112 109 109 109H11Q8 109 8 106z" fill="url(#df)" />
    <path d="M8 101H112M8 104H112" stroke="#58afd6" strokeWidth="1" />
    <circle cx="60" cy="72" r="23.500" fill="#4fb2dd" />
    <path d="M54 59H66V72H73L60 87 47 72H54z" fill="#7ed2f7" />
  </>
);

const trash = (
  <>
    <Gradient id="tr" from="#c6ccd4" to="#efefef" />
    <path d="M20 28L30 108Q33 119 60 119T90 108L100 28z" fill="url(#tr)" opacity=".95" />
    <ellipse cx="60" cy="29" rx="40" ry="11" fill="#a6b0bd" stroke="#dfe4e9" strokeWidth="2" />
    <path d="M24 33L29 21 38 20 46 14 56 20 67 15 74 22 88 22 94 34 80 39 40 39z" fill="#e2e0dc" />
    <path d="M30 25l8-3 4 8-8 3zM74 25l8 1 3 8-8 2zM50 17l5 4-7 1z" fill="#63666c" />
    <path d="M44 24l11 0-3 7-7 0z" fill="#2fb7cf" />
    <path d="M62 26l10-3 4 9-11 4z" fill="#8b4a4a" />
    <path d="M68 30l9 1-4 6-7-1z" fill="#3d4f8f" />
    <path d="M40 31l8 4-3 5zM56 30l5 9-8 2z" fill="#6b675f" />
    <path d="M54 32l5 0-4 8z" fill="#b5703c" />
    <path d="M46 50q18 8 28-6-2 16-16 16z" fill="#fff" opacity=".75" />
    <path d="M36 48l6 62M86 48l-8 62" stroke="#fff" strokeWidth="4" opacity=".3" />
  </>
);

function Dock() {
  return (
    <div className="absolute left-[226px] top-[1456px] flex h-[160px] w-[2110px] rounded-t-[12px] bg-gradient-to-b from-[#7b8fa9] to-[#78a5e3] pl-2 shadow-[0_0_70px_rgba(0,0,0,0.22),0_-1px_2px_rgba(0,0,0,0.3)]">
      <DockItem viewBox="-18 18 360 432" running>{finder}</DockItem>
      <DockItem viewBox="342 18 360 432">{launchpad}</DockItem>
      <DockItem viewBox="702 18 360 432">{missionControl}</DockItem>
      <DockItem viewBox="1062 18 360 432">{slack}</DockItem>
      <DockItem viewBox="12 -12 360 432">{cat}</DockItem>
      <DockItem running>{chrome}</DockItem>
      <DockItem>{safari}</DockItem>
      <DockItem running>{onePassword}</DockItem>
      <DockItem viewBox="12 18 360 432">{contacts}</DockItem>
      <DockItem viewBox="372 18 360 432">{calendar}</DockItem>
      <DockItem viewBox="732 18 360 432">{prefs}</DockItem>
      <DockItem viewBox="1092 18 360 432" running>{sublime}</DockItem>
      <DockItem running>{spotify}</DockItem>
      <DockItem>{github}</DockItem>
      <DockItem running>{notes}</DockItem>
      <div className="mx-[26px] mt-[18px] h-[108px] w-[2px] bg-[#5277ad]" />
      <DockItem>{downloads}</DockItem>
      <DockItem>{trash}</DockItem>
    </div>
  );
}

export default function App() {
  return (
    <div className="relative h-[1600px] w-[2560px] overflow-hidden bg-gradient-to-b from-[#3f669c] to-[#5080bd] font-['Inter',sans-serif]">
      <Desktop />
      <PlayerWindow />
      <MenuBar />
      <div className="absolute left-0 top-[46px] flex h-[1410px] w-[2472px] flex-col overflow-hidden rounded-[11px] bg-[#f2f2f2] shadow-[0_14px_50px_rgba(0,0,0,0.55)]">
        <TabStrip />
        <AddressBar />
        <Bookmarks />
        <AppHeader />
        <Canvas />
      </div>
      <Dock />
    </div>
  );
}
